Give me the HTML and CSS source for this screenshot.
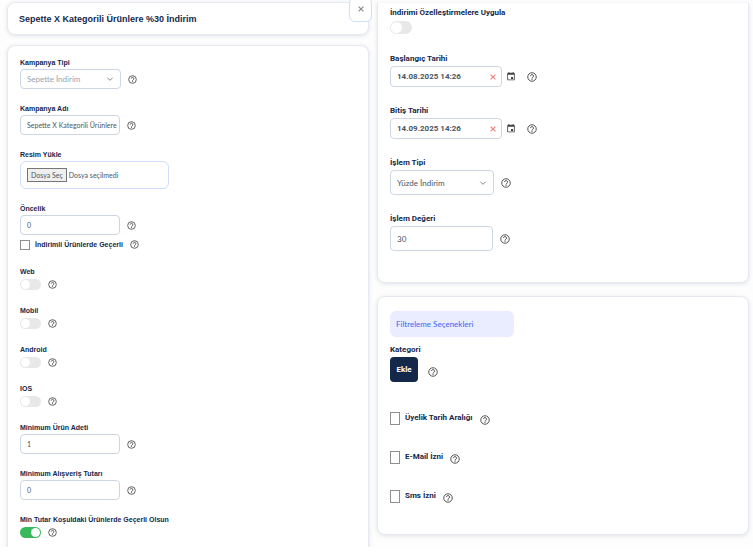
FILE: index.html
```html
<!DOCTYPE html>
<html lang="tr">
<head>
  <meta charset="UTF-8">
  <meta name="viewport" content="width=device-width, initial-scale=1">
  <title>Sepette X Kategorili Ürünlere %30 İndirim</title>
  <link rel="stylesheet" href="styles.css">
</head>
<body>
  <svg class="sprite" aria-hidden="true">
    <symbol id="help" viewBox="0 0 24 24">
      <circle cx="12" cy="12" r="10.2" fill="none" stroke="currentColor" stroke-width="2"/>
      <path d="M8.4 9.800a3.600 3.600 0 1 1 5.600 3c-1.300.9-2 1.500-2 2.900" fill="none" stroke="currentColor" stroke-width="2.200"/>
      <rect x="10.900" y="16.600" width="2.200" height="2.200" fill="currentColor"/>
    </symbol>
    <symbol id="chevron" viewBox="0 0 12 12">
      <path d="M2 4l4 4 4-4" fill="none" stroke="currentColor" stroke-width="1.500"/>
    </symbol>
    <symbol id="calendar" viewBox="0 0 24 24">
      <path d="M19 3h-1V1h-2v2H8V1H6v2H5a2 2 0 0 0-2 2v14a2 2 0 0 0 2 2h14a2 2 0 0 0 2-2V5a2 2 0 0 0-2-2zm0 16H5V8h14v11zm-7-6h5v5h-5z" fill="currentColor"/>
    </symbol>
    <symbol id="cross" viewBox="0 0 10 10">
      <path d="M1 1l8 8M9 1l-8 8" fill="none" stroke="currentColor" stroke-width="2"/>
    </symbol>
  </svg>

  <form class="page">
    <div class="column column-main">
      <header class="card title-card">
        <h1>Sepette X Kategorili Ürünlere %30 İndirim</h1>
        <button type="button" class="close" aria-label="Kapat"><svg class="icon-cross"><use href="#cross"/></svg></button>
      </header>

      <section class="card form-card">
        <div class="field">
          <label for="tip">Kampanya Tipi</label>
          <div class="row">
            <div class="select">
              <select id="tip" disabled><option>Sepette İndirim</option></select>
              <svg class="chevron"><use href="#chevron"/></svg>
            </div>
            <svg class="help"><use href="#help"/></svg>
          </div>
        </div>
        <div class="field">
          <label for="ad">Kampanya Adı</label>
          <div class="row">
            <input type="text" class="text" id="ad" value="Sepette X Kategorili Ürünlere %30 İndirim">
            <svg class="help"><use href="#help"/></svg>
          </div>
        </div>
        <div class="field">
          <label for="resim">Resim Yükle</label>
          <label class="upload">
            <input type="file" id="resim" class="hidden-file">
            <span class="upload-button">Dosya Seç</span>
            <span>Dosya seçilmedi</span>
          </label>
        </div>
        <div class="field">
          <label for="oncelik">Öncelik</label>
          <div class="row">
            <input type="text" class="text" id="oncelik" value="0">
            <svg class="help"><use href="#help"/></svg>
          </div>
          <div class="row check-row">
            <input type="checkbox" class="check" id="indirimli">
            <label for="indirimli">İndirimli Ürünlerde Geçerli</label>
            <svg class="help"><use href="#help"/></svg>
          </div>
        </div>
        <div class="field">
          <label for="web">Web</label>
          <div class="row toggle-row">
            <input type="checkbox" class="toggle" id="web">
            <svg class="help"><use href="#help"/></svg>
          </div>
        </div>
        <div class="field">
          <label for="mobil">Mobil</label>
          <div class="row toggle-row">
            <input type="checkbox" class="toggle" id="mobil">
            <svg class="help"><use href="#help"/></svg>
          </div>
        </div>
        <div class="field">
          <label for="android">Android</label>
          <div class="row toggle-row">
            <input type="checkbox" class="toggle" id="android">
            <svg class="help"><use href="#help"/></svg>
          </div>
        </div>
        <div class="field">
          <label for="ios">IOS</label>
          <div class="row toggle-row">
            <input type="checkbox" class="toggle" id="ios">
            <svg class="help"><use href="#help"/></svg>
          </div>
        </div>
        <div class="field">
          <label for="adet">Minimum Ürün Adeti</label>
          <div class="row">
            <input type="text" class="text" id="adet" value="1">
            <svg class="help"><use href="#help"/></svg>
          </div>
        </div>
        <div class="field">
          <label for="tutar">Minimum Alışveriş Tutarı</label>
          <div class="row">
            <input type="text" class="text" id="tutar" value="0">
            <svg class="help"><use href="#help"/></svg>
          </div>
        </div>
        <div class="field">
          <label for="kosul">Min Tutar Koşuldaki Ürünlerde Geçerli Olsun</label>
          <div class="row toggle-row">
            <input type="checkbox" class="toggle" id="kosul" checked>
            <svg class="help"><use href="#help"/></svg>
          </div>
        </div>
      </section>
    </div>

    <div class="column column-side">
      <section class="card side-card">
        <div class="field">
          <label for="ozel">İndirimi Özelleştirmelere Uygula</label>
          <div class="row toggle-row">
            <input type="checkbox" class="toggle" id="ozel">
          </div>
        </div>
        <div class="field">
          <label for="baslangic">Başlangıç Tarihi</label>
          <div class="row date-row">
            <div class="date">
              <input type="text" id="baslangic" value="14.08.2025 14:26">
              <button type="button" class="clear" aria-label="Temizle"><svg class="icon-cross"><use href="#cross"/></svg></button>
            </div>
            <svg class="calendar"><use href="#calendar"/></svg>
            <svg class="help"><use href="#help"/></svg>
          </div>
        </div>
        <div class="field">
          <label for="bitis">Bitiş Tarihi</label>
          <div class="row date-row">
            <div class="date">
              <input type="text" id="bitis" value="14.09.2025 14:26">
              <button type="button" class="clear" aria-label="Temizle"><svg class="icon-cross"><use href="#cross"/></svg></button>
            </div>
            <svg class="calendar"><use href="#calendar"/></svg>
            <svg class="help"><use href="#help"/></svg>
          </div>
        </div>
        <div class="field">
          <label for="islem">İşlem Tipi</label>
          <div class="row">
            <div class="select">
              <select id="islem"><option>Yüzde İndirim</option></select>
              <svg class="chevron"><use href="#chevron"/></svg>
            </div>
            <svg class="help"><use href="#help"/></svg>
          </div>
        </div>
        <div class="field">
          <label for="deger">İşlem Değeri</label>
          <div class="row">
            <input type="text" class="text" id="deger" value="30">
            <svg class="help"><use href="#help"/></svg>
          </div>
        </div>
      </section>

      <section class="card filter-card">
        <h2>Filtreleme Seçenekleri</h2>
        <div class="category">
          <label for="kategori">Kategori</label>
          <div class="row">
            <button type="button" class="add" id="kategori">Ekle</button>
            <svg class="help"><use href="#help"/></svg>
          </div>
        </div>
        <div class="filters">
          <div class="row">
            <input type="checkbox" class="check" id="uyelik">
            <label for="uyelik">Üyelik Tarih Aralığı</label>
            <svg class="help"><use href="#help"/></svg>
          </div>
          <div class="row">
            <input type="checkbox" class="check" id="email">
            <label for="email">E-Mail İzni</label>
            <svg class="help"><use href="#help"/></svg>
          </div>
          <div class="row">
            <input type="checkbox" class="check" id="sms">
            <label for="sms">Sms İzni</label>
            <svg class="help"><use href="#help"/></svg>
          </div>
        </div>
      </section>
    </div>
  </form>
</body>
</html>
```
FILE: styles.css
```css
* {
  box-sizing: border-box;
}

body {
  margin: 0;
  background-color: #fff;
  color: #14284b;
  font-family: "Liberation Sans", Arial, sans-serif;
  font-size: 7px;
}

input, select, button {
  margin: 0;
  font: inherit;
  color: inherit;
}

.sprite {
  display: none;
}

.page {
  display: grid;
  grid-template-columns: 371fr 382fr;
  background-color: #fdfdfd;
}

.column {
  display: flex;
  flex-direction: column;
}

.column-main {
  padding: 2px 2px 0 7px;
  gap: 10px;
}

.column-side {
  padding: 3px 4px 12px 6px;
  gap: 13px;
  font-family: Roboto, sans-serif;
  font-size: 8px;
}

.card {
  background-color: #fff;
  border: 1px solid #e6e9f0;
  border-radius: 8px;
  box-shadow: 0 1px 4px rgba(20, 40, 75, 0.12);
}

.title-card {
  position: relative;
  height: 33px;
  padding: 0 11px;
  display: flex;
  align-items: center;
}

h1 {
  margin: 0;
  font-size: 9px;
  line-height: 12px;
}

.close {
  position: absolute;
  top: -6px;
  right: -4px;
  width: 23px;
  height: 25px;
  padding: 0 0 2px;
  background-color: #fff;
  border: 1px solid #cfdffc;
  border-radius: 6px;
  color: #8c8c8c;
}

.icon-cross {
  display: block;
  width: 6px;
  height: 6px;
  margin: auto;
}

.form-card {
  display: flex;
  flex-direction: column;
  gap: 14px;
  padding: 11px 12px 8px;
  border-bottom: none;
  border-radius: 8px 8px 0 0;
}

.field {
  display: flex;
  flex-direction: column;
}

label {
  font-weight: bold;
  line-height: 12px;
}

.row {
  display: flex;
  align-items: center;
  gap: 7px;
}

.help {
  width: 9px;
  height: 9px;
  color: #333;
}

.text, .date, select, .upload {
  border: 1px solid #cdd6e3;
  border-radius: 4px;
  background-color: #fff;
  color: #4b5563;
}

.text, select, .upload, h2 {
  font-family: Lato, sans-serif;
}

.text {
  width: 100px;
  height: 20px;
  padding: 0 2px 0 6px;
}

.select {
  position: relative;
}

select {
  display: block;
  appearance: none;
  width: 101px;
  height: 20px;
  padding: 0 6px;
  font-size: 8px;
}

select:disabled {
  color: #9aa3af;
  opacity: 1;
}

.chevron {
  position: absolute;
  top: 50%;
  right: 7px;
  width: 8px;
  height: 8px;
  margin-top: -4px;
  color: #7c8795;
  pointer-events: none;
}

.upload {
  width: 149px;
  height: 28px;
  padding: 0 6px;
  display: flex;
  align-items: center;
  gap: 2px;
  border-color: #cfdffc;
  border-radius: 6px;
  font-weight: normal;
}

.hidden-file {
  position: absolute;
  width: 1px;
  height: 1px;
  opacity: 0;
}

.upload-button {
  padding: 0 3px;
  border: 1px solid #767676;
  background-color: #efefef;
}

.check {
  appearance: none;
  width: 10px;
  height: 10px;
  border: 1px solid #8f8f8f;
  background-color: #fff;
}

.check-row {
  height: 17px;
  padding-top: 2px;
  gap: 5px;
}

.check-row .help {
  margin-left: 2px;
}

.toggle-row {
  height: 13px;
}

.toggle {
  appearance: none;
  width: 21px;
  height: 11px;
  border-radius: 6px;
  background-color: #e8e8e8;
  padding: 1px;
  display: flex;
}

.toggle::before {
  content: "";
  width: 9px;
  height: 9px;
  border-radius: 50%;
  background-color: #fff;
}

.toggle:checked {
  background-color: #37b95c;
  justify-content: flex-end;
}

/* sağ kolon */
.side-card {
  display: flex;
  flex-direction: column;
  gap: 17px;
  padding: 3px 12px 31px;
  border-top: none;
  border-radius: 0 0 8px 8px;
}

.column-side label {
  line-height: 14px;
}

.column-side .help {
  width: 10px;
  height: 10px;
}

.column-side .toggle-row {
  height: 15px;
}

.column-side .toggle {
  width: 22px;
  height: 13px;
  border-radius: 7px;
}

.column-side .toggle::before {
  width: 11px;
  height: 11px;
}

.column-side select {
  width: 104px;
  height: 25px;
}

.column-side .text {
  width: 103px;
  height: 25px;
}

.date {
  width: 112px;
  height: 21px;
  padding: 0 5px 0 6px;
  display: flex;
  align-items: center;
}

.date input {
  flex: 1;
  min-width: 0;
  padding: 0;
  border: none;
  background: none;
  font-weight: bold;
}

.clear {
  padding: 0;
  border: none;
  background: none;
  color: #f08080;
}

.date-row {
  gap: 4px;
}

.calendar {
  width: 10px;
  height: 11px;
  color: #444;
}

.date-row .help {
  margin-left: 7px;
}

.filter-card {
  padding: 14px 12px 31px;
}

h2 {
  width: 124px;
  height: 26px;
  margin: 0 0 6px;
  padding: 0 6px;
  border-radius: 6px;
  background-color: #e9edff;
  color: #4264f5;
  font-size: 8px;
  font-weight: normal;
  line-height: 26px;
}

.category {
  display: flex;
  flex-direction: column;
}

.category .row {
  gap: 10px;
}

.category .help {
  margin-top: 4px;
}

.add {
  width: 28px;
  height: 25px;
  padding: 0;
  border: none;
  border-radius: 4px;
  background-color: #14284b;
  color: #fff;
  font-weight: bold;
}

.filters {
  display: flex;
  flex-direction: column;
  gap: 25px;
  margin-top: 29px;
}

.filters .row {
  gap: 5px;
}

.filters .check {
  height: 13px;
}

.filters .help {
  margin: 4px 0 0 2px;
}
```
